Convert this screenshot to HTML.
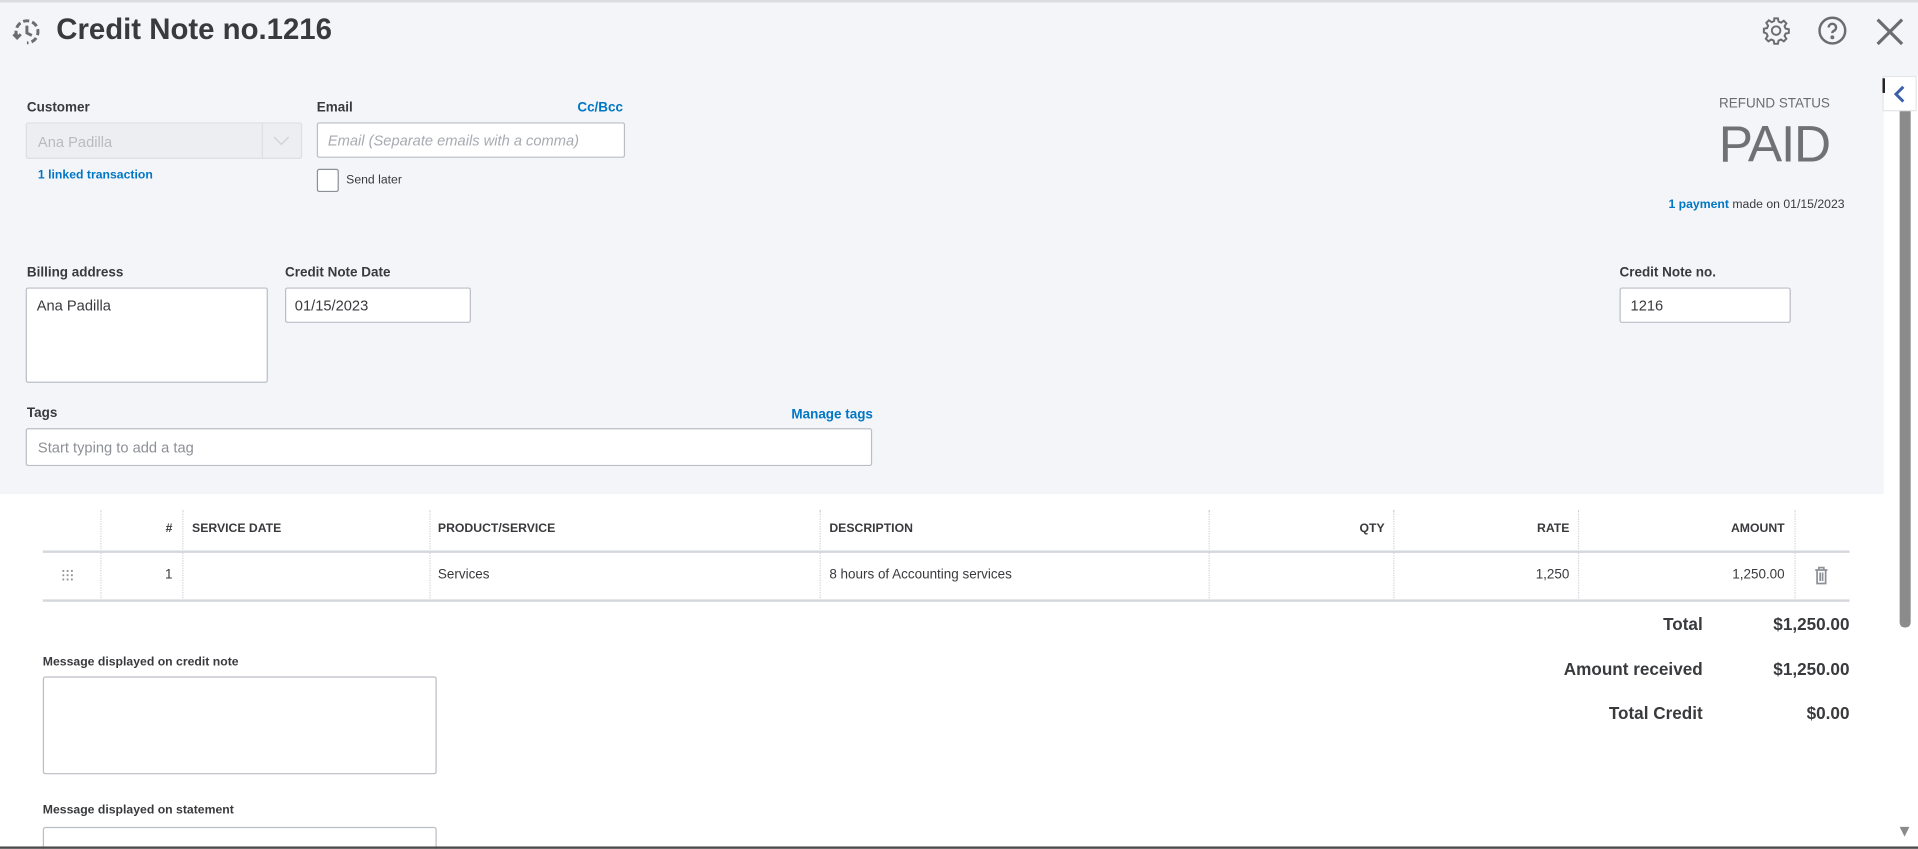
<!DOCTYPE html>
<html><head><meta charset="utf-8"><style>
html,body{margin:0;padding:0;width:1918px;height:849px;overflow:hidden;background:#fff;}
#w{position:absolute;left:0;top:0;width:1568px;height:694px;overflow:hidden;transform:scale(1.22321);transform-origin:0 0;font-family:"Liberation Sans",sans-serif;color:#393a3d;}
.a{position:absolute;}
.top{left:0;top:0;width:1568px;height:404px;background:#f4f5f8;border-top:2px solid #dcdde0;box-sizing:border-box;}
.lbl{font-size:11px;font-weight:bold;color:#393a3d;}
.lnk{font-size:10px;color:#0077c5;font-weight:bold;}
.inp{background:#fff;border:1px solid #babec5;border-radius:2px;box-sizing:border-box;font-size:12px;}
.th{font-size:10px;font-weight:bold;top:427px;}
.td{font-size:11px;top:464px;}
.vl{top:417px;height:74px;border-left:1px dotted #d0d3d8;width:0;}
.tot{font-size:14px;font-weight:bold;text-align:right;}
</style></head><body><div id="w">
<div class="a top"></div>
<svg class="a" style="left:9px;top:13px" width="26" height="26" viewBox="0 0 26 26" fill="none" stroke="#6b6c72" stroke-width="2.4">
<path d="M5 17 A9 9 0 1 1 13 22" stroke-dasharray="5 2.5"/><path d="M13 8v6l4 2"/><path d="M2 15l3 3 3-3"/></svg>
<div class="a" style="left:46px;top:11px;font-size:24px;font-weight:bold;color:#393a3d">Credit Note no.1216</div>
<svg class="a" style="left:1440px;top:13px" width="24" height="24" viewBox="0 0 24 24" fill="none" stroke="#6b6c72" stroke-width="1.6"><circle cx="12" cy="12" r="3.5"/><path d="M10.5 2h3l.5 2.6 2 .9 2.3-1.5 2.1 2.1-1.5 2.3.9 2 2.6.5v3l-2.6.5-.9 2 1.5 2.3-2.1 2.1-2.3-1.5-2 .9-.5 2.6h-3l-.5-2.6-2-.9-2.3 1.5-2.1-2.1 1.5-2.3-.9-2L2 13.5v-3l2.6-.5.9-2L4 5.7l2.1-2.1 2.3 1.5 2-.9z"/></svg>
<svg class="a" style="left:1486px;top:13px" width="24" height="24" viewBox="0 0 24 24" fill="none" stroke="#6b6c72" stroke-width="2"><circle cx="12" cy="12" r="10.5"/><path d="M9 9.5a3 3 0 1 1 4 2.8c-.8.4-1 1-1 1.8"/><circle cx="12" cy="17.5" r=".6" fill="#6b6c72"/></svg>
<svg class="a" style="left:1533px;top:14px" width="24" height="24" viewBox="0 0 24 24" stroke="#6b6c72" stroke-width="2.6"><path d="M2 2L22 22M22 2L2 22"/></svg>

<div class="a lbl" style="left:22px;top:82px">Customer</div>
<div class="a inp" style="left:21px;top:100px;width:226px;height:30px;background:#eceef1;border-color:#dcdfe3;color:#b8bbc0;padding:8px 9px">Ana Padilla</div>
<div class="a" style="left:214px;top:101px;width:0;height:28px;border-left:1px solid #dcdfe3"></div>
<svg class="a" style="left:223px;top:110px" width="14" height="10"><path d="M1 2l6 6 6-6" fill="none" stroke="#d0d3d8" stroke-width="1.2"/></svg>
<div class="a lnk" style="left:31px;top:138px">1 linked transaction</div>
<div class="a lbl" style="left:259px;top:82px">Email</div>
<div class="a lnk" style="left:472px;top:82px;font-size:11px">Cc/Bcc</div>
<div class="a inp" style="left:259px;top:100px;width:252px;height:29px;color:#a7aab0;font-style:italic;padding:7px 8px">Email (Separate emails with a comma)</div>
<div class="a inp" style="left:259px;top:138px;width:18px;height:19px;border-color:#8d9096"></div>
<div class="a" style="left:283px;top:142px;font-size:10px">Send later</div>

<div class="a" style="left:1380px;top:79px;width:116px;text-align:right;font-size:11px;color:#6b6c72">REFUND STATUS</div>
<div class="a" style="left:1380px;top:94px;width:116px;text-align:right;font-size:42px;color:#707176;letter-spacing:-1px">PAID</div>
<div class="a" style="left:1300px;top:162px;width:208px;text-align:right;font-size:10px;color:#393a3d"><span style="color:#0077c5;font-weight:bold">1 payment</span> made on 01/15/2023</div>

<div class="a lbl" style="left:22px;top:217px">Billing address</div>
<div class="a inp" style="left:21px;top:235px;width:198px;height:78px;padding:7px 8px">Ana Padilla</div>
<div class="a lbl" style="left:233px;top:217px">Credit Note Date</div>
<div class="a inp" style="left:233px;top:235px;width:152px;height:29px;padding:7px 7px">01/15/2023</div>
<div class="a lbl" style="left:1324px;top:217px">Credit Note no.</div>
<div class="a inp" style="left:1324px;top:235px;width:140px;height:29px;padding:7px 8px">1216</div>
<div class="a lbl" style="left:22px;top:332px">Tags</div>
<div class="a lnk" style="left:647px;top:333px;font-size:11px">Manage tags</div>
<div class="a inp" style="left:21px;top:350px;width:692px;height:31px;padding:8px 9px;color:#8d9096">Start typing to add a tag</div>

<div class="a" style="left:1540px;top:62px;width:28px;height:632px;background:#fff"></div>
<div class="a" style="left:1539px;top:62px;width:28px;height:29px;border:1px solid #e3e5e8;background:#fff;box-sizing:border-box"></div>
<svg class="a" style="left:1547px;top:69px" width="12" height="16"><path d="M9 2L3 8l6 6" fill="none" stroke="#3c5fa8" stroke-width="2.4"/></svg>
<div class="a" style="left:1539px;top:64px;width:2px;height:12px;background:#222"></div>
<div class="a" style="left:1553px;top:91px;width:9px;height:422px;background:#8b8b8b;border-radius:0 0 4px 4px"></div>
<svg class="a" style="left:1552px;top:675px" width="10" height="10"><path d="M1 1h8l-4 8z" fill="#8b8b8b"/></svg>

<div class="a vl" style="left:82px"></div><div class="a vl" style="left:149px"></div><div class="a vl" style="left:351px"></div><div class="a vl" style="left:670px"></div><div class="a vl" style="left:988px"></div><div class="a vl" style="left:1139px"></div><div class="a vl" style="left:1290px"></div><div class="a vl" style="left:1467px"></div>
<div class="a th" style="left:120px;width:21px;text-align:right">#</div>
<div class="a th" style="left:157px">SERVICE DATE</div>
<div class="a th" style="left:358px">PRODUCT/SERVICE</div>
<div class="a th" style="left:678px">DESCRIPTION</div>
<div class="a th" style="left:1000px;width:132px;text-align:right">QTY</div>
<div class="a th" style="left:1150px;width:133px;text-align:right">RATE</div>
<div class="a th" style="left:1300px;width:159px;text-align:right">AMOUNT</div>
<div class="a" style="left:35px;top:450px;width:1477px;height:2px;background:#d4d7dc"></div>
<div class="a" style="left:35px;top:490px;width:1477px;height:2px;background:#d4d7dc"></div>
<svg class="a" style="left:51px;top:466px" width="10" height="9" fill="#8d9096"><rect x="0" y="0" width="1.5" height="1.5"/><rect x="3.5" y="0" width="1.5" height="1.5"/><rect x="7" y="0" width="1.5" height="1.5"/><rect x="0" y="3.5" width="1.5" height="1.5"/><rect x="3.5" y="3.5" width="1.5" height="1.5"/><rect x="7" y="3.5" width="1.5" height="1.5"/><rect x="0" y="7" width="1.5" height="1.5"/><rect x="3.5" y="7" width="1.5" height="1.5"/><rect x="7" y="7" width="1.5" height="1.5"/></svg>
<div class="a td" style="left:120px;width:21px;text-align:right">1</div>
<div class="a td" style="left:358px">Services</div>
<div class="a td" style="left:678px">8 hours of Accounting services</div>
<div class="a td" style="left:1150px;width:133px;text-align:right">1,250</div>
<div class="a td" style="left:1300px;width:159px;text-align:right">1,250.00</div>
<svg class="a" style="left:1483px;top:463px" width="12" height="15" fill="none" stroke="#8d9096" stroke-width="1.4"><path d="M1 3h10M4 3V1h4v2M2.5 3v11h7V3M5 5v7M7 5v7"/></svg>

<div class="a tot" style="left:1250px;top:502px;width:142px">Total</div>
<div class="a tot" style="left:1400px;top:502px;width:112px">$1,250.00</div>
<div class="a tot" style="left:1200px;top:539px;width:192px">Amount received</div>
<div class="a tot" style="left:1400px;top:539px;width:112px">$1,250.00</div>
<div class="a tot" style="left:1200px;top:575px;width:192px">Total Credit</div>
<div class="a tot" style="left:1400px;top:575px;width:112px">$0.00</div>

<div class="a lbl" style="left:35px;top:536px;font-size:10px">Message displayed on credit note</div>
<div class="a inp" style="left:35px;top:553px;width:322px;height:80px"></div>
<div class="a lbl" style="left:35px;top:657px;font-size:10px">Message displayed on statement</div>
<div class="a inp" style="left:35px;top:676px;width:322px;height:30px"></div>
<div class="a" style="left:0;top:692px;width:1568px;height:2px;background:#4a4a4a"></div>
</div></body></html>
